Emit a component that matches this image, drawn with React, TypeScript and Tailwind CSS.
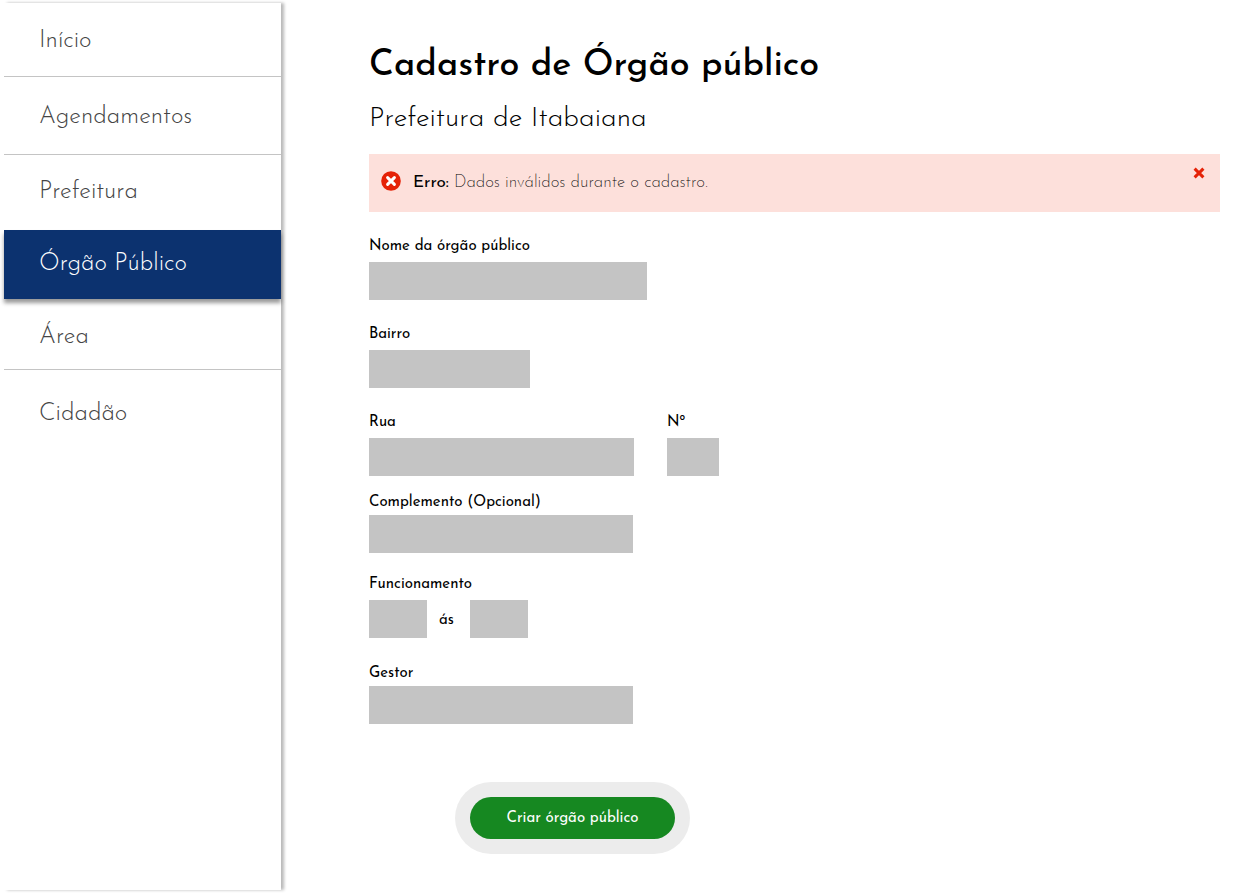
import type { ReactNode } from "react";

const NAV = [
  { label: "Início", cell: "h-[74px] pt-0.5 border-b border-[#c4c4c4] text-[#444]" },
  { label: "Agendamentos", cell: "h-[78px] pt-0.5 border-b border-[#c4c4c4] text-[#444]" },
  { label: "Prefeitura", cell: "h-[75px] pb-0.5 text-[#444]" },
  { label: "Órgão Público", cell: "h-[69px] pb-0.5 bg-[#0c326f] text-white shadow-[0_4px_4px_rgba(0,0,0,0.4)]", active: true },
  { label: "Área", cell: "h-[71px] pt-1.5 border-b border-[#c4c4c4] text-[#444]" },
  { label: "Cidadão", cell: "h-[84px] pt-1 text-[#444]" },
];

const box = "block h-[38px] bg-[#c4c4c4] px-2 text-[15px] text-black outline-offset-2";

function Field({ id, label, width, tight }: { id: string; label: string; width: string; tight?: boolean }) {
  return (
    <div className={tight ? "flex flex-col gap-px" : "flex flex-col gap-1"}>
      <label htmlFor={id} className="h-[22px] leading-[22px]">{label}</label>
      <input id={id} type="text" className={`${box} ${width}`} />
    </div>
  );
}

function Row({ space, children }: { space: string; children: ReactNode }) {
  return <div className={`flex ${space}`}>{children}</div>;
}

export default function App() {
  return (
    <div className="flex min-h-screen bg-white font-['Josefin_Sans',Lato,sans-serif] text-black">
      <nav
        aria-label="Principal"
        className="mt-[3px] mb-1 ml-1 w-[277px] shrink-0 bg-white shadow-[3px_0_3px_rgba(0,0,0,0.28)]"
      >
        <ul>
          {NAV.map((item) => (
            <li key={item.label}>
              <a
                href="#"
                aria-current={item.active ? "page" : undefined}
                className={`flex items-center pl-[35px] text-[24px] leading-8 font-light ${item.cell}`}
              >
                {item.label}
              </a>
            </li>
          ))}
        </ul>
      </nav>

      <main className="min-w-0 grow pt-[42px] pr-[30px] pb-10 pl-[88px]">
        <h1 className="text-[36px] leading-[48px] font-medium">Cadastro de Órgão público</h1>
        <h2 className="mt-[11px] text-[28px] leading-9 font-light">Prefeitura de Itabaiana</h2>

        <div role="alert" className="mt-[17px] flex h-[58px] items-start bg-[#fde0db] pr-[15px] pl-3">
          <svg viewBox="0 0 20 20" className="mt-[17px] size-5 shrink-0" aria-hidden="true">
            <circle cx="10" cy="10" r="9.8" fill="#e52207" />
            <path d="M6.6 6.6l6.8 6.8M13.4 6.6l-6.8 6.8" stroke="#fff" strokeWidth="3" strokeLinecap="round" />
          </svg>
          <p className="mt-4 ml-3 grow text-[17px] leading-[26px] font-extralight">
            <strong className="font-normal">Erro:</strong> Dados inválidos durante o cadastro.
          </p>
          <button type="button" aria-label="Fechar" className="mt-[13px] size-3">
            <svg viewBox="0 0 12 12" className="size-3" aria-hidden="true">
              <path d="M1.6 1.6l8.8 8.8M10.4 1.6l-8.8 8.8" stroke="#e52207" strokeWidth="3" strokeLinecap="butt" />
            </svg>
          </button>
        </div>

        <form className="text-[15px] font-normal" onSubmit={(e) => e.preventDefault()}>
          <Row space="mt-6">
            <Field id="nome" label="Nome da órgão público" width="w-[278px]" />
          </Row>
          <Row space="mt-6">
            <Field id="bairro" label="Bairro" width="w-[161px]" />
          </Row>
          <Row space="mt-6 gap-[33px]">
            <Field id="rua" label="Rua" width="w-[265px]" />
            <Field id="numero" label="Nº" width="w-[52px]" />
          </Row>
          <Row space="mt-4">
            <Field id="complemento" label="Complemento (Opcional)" width="w-[264px]" tight />
          </Row>
          <div className="mt-[21px] flex flex-col gap-1">
            <label htmlFor="abertura" className="h-[22px] leading-[22px]">Funcionamento</label>
            <div className="flex">
              <input id="abertura" type="text" className={`${box} w-[58px]`} />
              <label htmlFor="fechamento" className="h-[38px] w-[43px] pl-3 leading-[42px]">ás</label>
              <input id="fechamento" type="text" className={`${box} w-[58px]`} />
            </div>
          </div>
          <Row space="mt-[25px]">
            <Field id="gestor" label="Gestor" width="w-[264px]" tight />
          </Row>
          <button
            type="submit"
            className="mt-[73px] ml-[101px] block h-[42px] w-[205px] rounded-full bg-[#168821] pt-0.5 text-white ring-[15px] ring-[#ececec]"
          >
            Criar órgão público
          </button>
        </form>
      </main>
    </div>
  );
}
